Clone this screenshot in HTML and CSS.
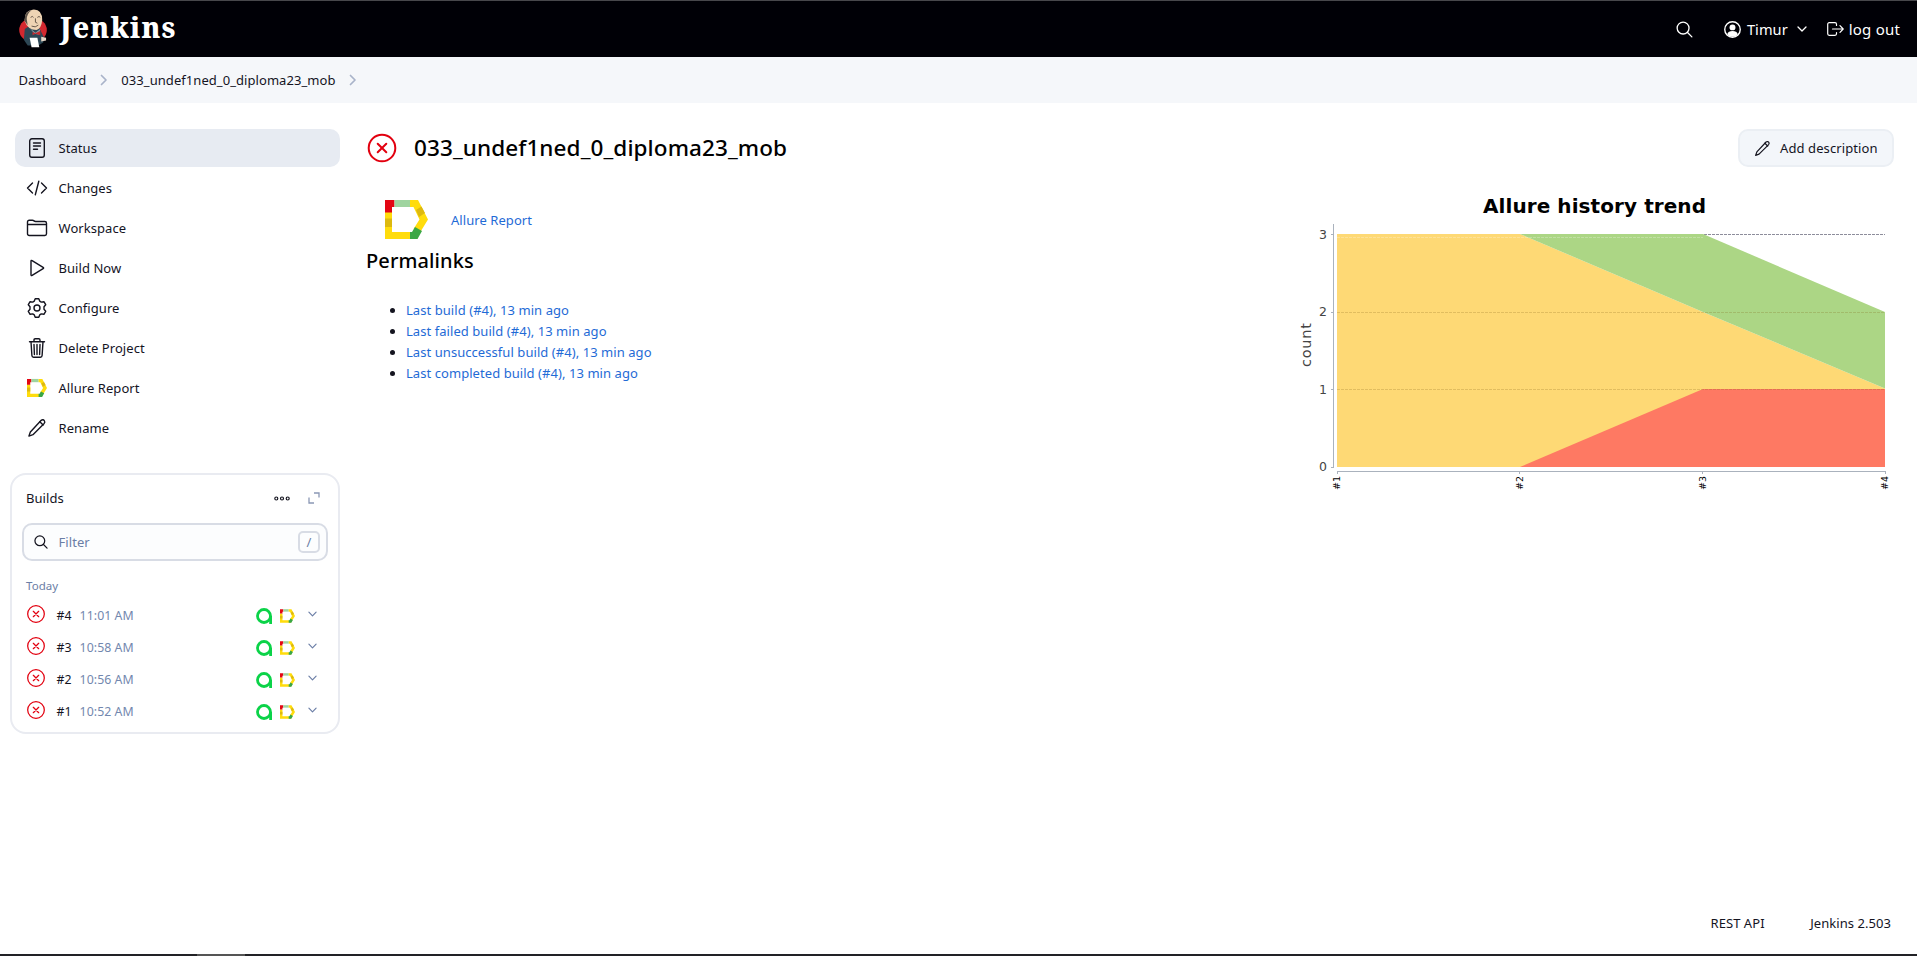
FILE: index.html
```html
<!DOCTYPE html>
<html lang="en">
<head>
<meta charset="utf-8">
<title>033_undef1ned_0_diploma23_mob [Jenkins]</title>
<link rel="stylesheet" href="styles.css">
</head>
<body>
<svg class="defs" aria-hidden="true">
  <symbol id="fail" viewBox="0 0 32 32"><g fill="none" stroke="#e2000f" stroke-width="2" stroke-linecap="round"><circle cx="16" cy="16" r="13.3"/><path d="M11.700 11.700l8.600 8.600M20.300 11.700l-8.600 8.600"/></g></symbol>
  <symbol id="allure" viewBox="0 0 43 39">
    <path fill="#ffdc0c" d="M0 12h7v20h18l8 7H0z"/><path fill="#e30613" d="M0 0h9.500v7H7v5.500H0z"/><path fill="#9fd49f" d="M9.500 0H25v7H9.500z"/><path fill="#ffdc0c" d="M25 0h8l10 19.500-8 13-6.500-3.500 6-9.500L28.500 7H25z"/><path fill="#ddb90f" d="M0 18.500h7v8.500H0zM31 10l5.500-3.500 3.500 6.500-6 4z"/><path fill="#3aa745" d="M25 32h2l3-5 7 4-4.500 8H25z"/>
  </symbol>
  <symbol id="qa" viewBox="0 0 16 16"><circle cx="8" cy="8" r="6.500" fill="none" stroke="#0bd348" stroke-width="2.800"/><path d="M13.200 8H16v8h-2.800z" fill="#0bd348"/></symbol>
  <symbol id="down" viewBox="0 0 10 6"><path d="M1 1l4 4 4-4" fill="none" stroke="currentColor" stroke-width="1.300" stroke-linecap="round" stroke-linejoin="round"/></symbol>
  <symbol id="right" viewBox="0 0 8 12"><path d="M1.500 1.500L6 6l-4.500 4.500" fill="none" stroke="#a9b3c9" stroke-width="1.700" stroke-linecap="round" stroke-linejoin="round"/></symbol>
  <symbol id="pencil" viewBox="0 0 512 512"><g fill="none" stroke="currentColor" stroke-width="36" stroke-linejoin="round" stroke-linecap="round"><path d="M364 60c28-24 62-14 78 6 16 21 20 48-2 72L152 426 48 464l38-104z"/><path d="M328 98l84 84"/></g></symbol>
  <symbol id="search" viewBox="0 0 18 18"><g fill="none" stroke="currentColor" stroke-width="1.400" stroke-linecap="round"><circle cx="7.500" cy="7.500" r="6.300"/><path d="M12.200 12.200l4.600 4.600"/></g></symbol>
</svg>

<header class="top">
  <a class="brand">
    <svg class="butler" viewBox="0 0 30 40">
      <ellipse cx="14.500" cy="21" rx="14.300" ry="12.500" fill="#d3282f"/>
      <path d="M5 31l1-11 3-2 12 1 5 10-1 5-5 3H9z" fill="#2d4756"/>
      <path d="M6 12Q5 1 14 0q10-1 10 11-1 9-6 10-9 0-12-9z" fill="#eed4b4"/>
      <path d="M6 12Q5 2 13 .500 8 4 8 10l1 6z" fill="#5b5148"/>
      <path d="M12 8q2-2 3 0M19 8q2-2 3 0M17 9v4l2 1M13 17q4 2 7-1" fill="none" stroke="#65564a" stroke-width="1"/>
      <path d="M11 19l6 5 5-4-1 6-5-1z" fill="#8b9aa3"/><path d="M14 23l3 1.500 5-2.500v4.500l-5-1.500-3 1.500z" fill="#c32a30"/>
      <path d="M11 29h8l2 10h-8z" fill="#fff"/><path d="M23 28l5 1v3l-5 1z" fill="#e5d5c5"/>
    </svg>
    <span class="wordmark">Jenkins</span>
  </a>
  <div class="tools">
    <svg class="i-search"><use href="#search"/></svg>
    <a class="user"><svg class="i-user" viewBox="0 0 16 16"><circle cx="8" cy="8" r="7.300" fill="none" stroke="#fff" stroke-width="1.300"/><circle cx="8" cy="6" r="2.800" fill="#fff"/><path d="M3 12.500q1-3 5-3t5 3q-2 2.400-5 2.400t-5-2.400z" fill="#fff"/></svg><span>Timur</span><svg class="i-down"><use href="#down"/></svg></a>
    <a class="logout"><svg class="i-out" viewBox="0 0 17 14"><path d="M9.500 3.500V2.200A1.500 1.500 0 0 0 8 .700H2.200A1.500 1.500 0 0 0 .700 2.200v9.600a1.500 1.500 0 0 0 1.500 1.500H8a1.500 1.500 0 0 0 1.500-1.500v-1.300M5.500 7h10.500M13 3.700L16.200 7 13 10.300" fill="none" stroke="#fff" stroke-width="1.200" stroke-linecap="round" stroke-linejoin="round"/></svg><span>log out</span></a>
  </div>
</header>

<nav class="crumbs"><a>Dashboard</a><svg><use href="#right"/></svg><a>033_undef1ned_0_diploma23_mob</a><svg><use href="#right"/></svg></nav>

<div class="page">
  <aside class="side">
    <nav class="tasks">
      <a class="task active"><svg viewBox="0 0 20 20"><g class="ln"><rect x="2.700" y=".800" width="14.600" height="18.400" rx="2.200"/><path d="M6.500 5h7M6.500 8h7M6.500 11.200h4"/></g></svg><span>Status</span></a>
      <a class="task"><svg viewBox="0 0 20 20"><path class="ln" d="M5.500 5L.500 10l5 5M14.500 5l5 5-5 5M11.800 3.300L8.300 16.700"/></svg><span>Changes</span></a>
      <a class="task"><svg viewBox="0 0 20 20"><path class="ln" d="M.500 15.800V4a1.700 1.700 0 0 1 1.700-1.700h3.300q.800 0 1.500.600.700.600 1.600.600h9.200a1.700 1.700 0 0 1 1.700 1.700v10.600a1.700 1.700 0 0 1-1.700 1.700H2.200a1.700 1.700 0 0 1-1.700-1.700zM.500 6.500h19"/></svg><span>Workspace</span></a>
      <a class="task"><svg viewBox="0 0 20 20"><path class="ln" d="M4 3.200v13.600q0 1.200 1.100.600l11-6.700q1-.700 0-1.400l-11-6.700Q4 2 4 3.200z"/></svg><span>Build Now</span></a>
      <a class="task"><svg viewBox="0 0 20 20"><g class="ln"><circle cx="10" cy="10" r="3"/><path d="M8.200.700h3.600l.9 2.400 1.600 1 2.600-.4 1.800 3-1.700 2v2.600l1.700 2-1.800 3-2.600-.4-1.600 1-.9 2.400H8.200l-.9-2.400-1.600-1-2.600.4-1.800-3 1.700-2V8.700l-1.700-2 1.800-3 2.600.4 1.600-1z"/></g></svg><span>Configure</span></a>
      <a class="task"><svg viewBox="0 0 20 20"><path class="ln" d="M2.500 3.700h15M4 3.700l.9 13.800q.1 1.700 1.700 1.700h6.800q1.600 0 1.700-1.700L16 3.700M7 3.700V2q0-1.200 1.200-1.200h3.600Q13 .800 13 2v1.700M10 6.500v10M7 6.500l.4 10M13 6.500l-.4 10"/></svg><span>Delete Project</span></a>
      <a class="task"><svg><use href="#allure"/></svg><span>Allure Report</span></a>
      <a class="task"><svg><use href="#pencil"/></svg><span>Rename</span></a>
    </nav>
    <section class="builds">
      <div class="bhead"><span>Builds</span><svg class="dots" viewBox="0 0 16 5"><g fill="none" stroke="#14141f" stroke-width="1.200"><circle cx="2.300" cy="2.500" r="1.500"/><circle cx="8" cy="2.500" r="1.500"/><circle cx="13.700" cy="2.500" r="1.500"/></g></svg><svg class="expand" viewBox="0 0 12 12"><path d="M6 1h5v4.500M1 5.500V11h5" fill="none" stroke="#8b98b5" stroke-width="1.300"/></svg></div>
      <div class="filter"><svg viewBox="0 0 18 18"><g fill="none" stroke="currentColor" stroke-width="1.600" stroke-linecap="round"><circle cx="7.500" cy="7.500" r="6.300"/><path d="M12.200 12.200l4.600 4.600"/></g></svg><span>Filter</span><kbd>/</kbd></div>
      <div class="day">Today</div>
      <div class="build"><svg class="st"><use href="#fail"/></svg><b>#4</b><time>11:01 AM</time><svg class="qa"><use href="#qa"/></svg><svg class="al"><use href="#allure"/></svg><svg class="dn"><use href="#down"/></svg></div>
      <div class="build"><svg class="st"><use href="#fail"/></svg><b>#3</b><time>10:58 AM</time><svg class="qa"><use href="#qa"/></svg><svg class="al"><use href="#allure"/></svg><svg class="dn"><use href="#down"/></svg></div>
      <div class="build"><svg class="st"><use href="#fail"/></svg><b>#2</b><time>10:56 AM</time><svg class="qa"><use href="#qa"/></svg><svg class="al"><use href="#allure"/></svg><svg class="dn"><use href="#down"/></svg></div>
      <div class="build"><svg class="st"><use href="#fail"/></svg><b>#1</b><time>10:52 AM</time><svg class="qa"><use href="#qa"/></svg><svg class="al"><use href="#allure"/></svg><svg class="dn"><use href="#down"/></svg></div>
    </section>
  </aside>

  <main class="main">
    <div class="mhead"><svg class="big"><use href="#fail"/></svg><h1>033_undef1ned_0_diploma23_mob</h1><button><svg><use href="#pencil"/></svg><span>Add description</span></button></div>
    <div class="cols">
      <div class="info">
        <a class="report"><svg><use href="#allure"/></svg><span>Allure Report</span></a>
        <h2>Permalinks</h2>
        <ul><li><a>Last build (#4), 13 min ago</a></li><li><a>Last failed build (#4), 13 min ago</a></li><li><a>Last unsuccessful build (#4), 13 min ago</a></li><li><a>Last completed build (#4), 13 min ago</a></li></ul>
      </div>
      <svg class="chart" viewBox="1290 187 610 310">
        <text class="ct" x="1594.500" y="213" text-anchor="middle" textLength="223">Allure history trend</text>
        <path class="grid3" d="M1704 234.500h181"/>
        <path fill="#fed975" d="M1337 234h183l183 78 182 76.500V467H1337z"/>
        <path fill="#acd685" d="M1520 234h183l182 78v76.500L1703 312z"/>
        <path fill="#fe7963" d="M1520 467l183-78h182v78z"/>
        <path class="grid" d="M1337 312.500h548M1337 389.500h548"/><path class="grid l" d="M1337 237.500h366"/>
        <path class="axis" d="M1333.500 224v244M1331 234.500h2M1331 312.500h2M1331 389.500h2M1331 467.500h2M1337 471.500h549M1337.500 471v3M1519.500 471v3M1702.500 471v3M1885.500 471v3"/>
        <g class="yl"><text x="1327" y="239">3</text><text x="1327" y="316">2</text><text x="1327" y="394">1</text><text x="1327" y="471">0</text></g>
        <g class="xl"><text transform="translate(1340 490) rotate(-90)">#1</text><text transform="translate(1523 490) rotate(-90)">#2</text><text transform="translate(1706 490) rotate(-90)">#3</text><text transform="translate(1888 490) rotate(-90)">#4</text></g>
        <text class="cnt" transform="translate(1311 367) rotate(-90)" textLength="44">count</text>
      </svg>
    </div>
  </main>
</div>
<footer><a>REST API</a><a>Jenkins 2.503</a></footer>
<div class="strip"><i></i></div>
</body>
</html>
```
FILE: styles.css
```css
* { box-sizing: border-box; }
body { margin: 0; height: 956px; display: flex; flex-direction: column; background: #fff; color: #14141f; font: 13px/20px "Noto Sans", "Open Sans", sans-serif; letter-spacing: .06px; overflow: hidden; }
svg { display: block; flex: none; }
.defs { position: absolute; width: 0; height: 0; }
.top { height: 57px; flex: none; background: #000006; border-top: 1px solid #47474b; display: flex; align-items: center; justify-content: space-between; padding: 0 17px 0 19px; color: #fff; }
.brand { display: flex; align-items: center; gap: 12px; }
.butler { width: 29px; height: 40px; }
.wordmark { font: 800 28px/36px "Noto Serif", "DejaVu Serif", "Liberation Serif", serif; letter-spacing: 1.2px; padding-bottom: 4px; }
.tools { display: flex; align-items: center; font-size: 15px; }
.i-search { width: 17px; height: 17px; margin-right: 31px; }
.user, .logout { display: flex; align-items: center; }
.user { font-size: 14.6px; }
.i-user { width: 17px; height: 17px; margin-right: 6px; }
.i-down { width: 10px; height: 6px; margin: 0 20px 0 9px; }
.i-out { width: 17px; height: 14px; margin-right: 5px; }
.logout span { letter-spacing: .2px; }
.crumbs { height: 46px; flex: none; background: #f5f7fa; display: flex; align-items: center; padding-left: 18.5px; }
.crumbs svg { width: 8px; height: 12px; margin: 0 13.5px; }
.page { flex: 1; display: flex; padding-top: 26px; }
.side { width: 340px; flex: none; }
.tasks { display: grid; gap: 2px; padding-left: 15px; }
.task { height: 38px; border-radius: 10px; display: flex; align-items: center; gap: 11.5px; padding-left: 12px; }
.task svg { width: 20px; height: 20px; overflow: visible; }
.active { background: #e7ebf2; }
.ln { fill: none; stroke: #14141f; stroke-width: 1.4; stroke-linecap: round; stroke-linejoin: round; }
.builds { margin: 26px 0 0 10px; height: 261px; border: 2px solid #e9ebf1; border-radius: 16px; padding: 0 10px; }
.bhead { display: flex; align-items: center; height: 48px; padding: 0 8px 2px 4px; }
.bhead span { flex: 1; }
.dots { width: 16px; height: 5px; margin-right: 18px; }
.expand { width: 12px; height: 12px; }
.filter { height: 38px; border: 2px solid #d8dce5; border-radius: 10px; background: #fcfdfe; display: flex; align-items: center; padding: 0 6px 0 10px; color: #6b7ea6; }
.filter svg { width: 14px; height: 14px; color: #14141f; margin-right: 10.5px; }
.filter span { flex: 1; }
kbd { width: 22px; height: 22px; border: 2px solid #d8dce5; border-radius: 5px; font: inherit; line-height: 18px; text-align: center; }
.day { color: #6b7ea6; font-size: 11.5px; margin: 15px 0 2px 4px; line-height: 20px; }
.build { height: 32px; display: flex; align-items: center; padding-left: 4px; font-size: 12.3px; }
.build b { font-weight: 400; margin: 3px 8px 0 10.5px; }
.build time { color: #7287ae; flex: 1; margin-top: 3px; }
.st { width: 20px; height: 20px; }
.qa { width: 16px; height: 16px; margin: 3px 8px 0 0; }
.al { width: 15px; height: 14px; margin: 3px 13px 0 0; }
.dn { width: 9px; height: 6px; color: #6b7ea6; margin-right: 11px; }
.main { flex: 1; padding: 0 23px 0 26px; }
.mhead { display: flex; align-items: center; height: 38px; }
.big { width: 32px; height: 32px; }
h1 { margin: 0; padding-left: 16px; font-size: 22.5px; font-weight: 500; line-height: 32px; letter-spacing: .1px; color: #000; flex: 1; }
button { height: 38px; width: 156px; border: 2px solid #ebeff4; background: #f3f6fa; border-radius: 10px; font: inherit; letter-spacing: .1px; color: inherit; display: flex; align-items: center; gap: 9px; padding: 0 0 0 14px; }
button svg { width: 17px; height: 17px; }
.cols { display: flex; justify-content: space-between; }
.report { display: flex; align-items: center; gap: 23px; margin: 33px 0 0 19px; color: #1f6bd6; }
.report svg { width: 43px; height: 39px; }
h2 { margin: 8px 0 0; font-size: 20px; font-weight: 500; line-height: 28px; letter-spacing: .1px; color: #000; }
ul { margin: 25px 0 0; padding-left: 40px; line-height: 21px; }
li a { color: #1f6bd6; }
.chart { width: 610px; height: 310px; margin: 20px -6px 0 0; font-family: "DejaVu Sans", sans-serif; letter-spacing: 0; }
.ct { font-size: 20px; font-weight: 700; fill: #000; }
.axis { stroke: #aab2bd; fill: none; }
.grid3 { stroke: #8d8d9b; stroke-dasharray: 3 1; }
.grid { stroke: #7a5a10; stroke-opacity: .22; stroke-dasharray: 3 1; }
.l { stroke: #fff; stroke-opacity: .25; }
.yl { font-size: 12.5px; fill: #444; text-anchor: end; }
.xl { font-size: 9.5px; fill: #000; }
.cnt { font-size: 14.5px; fill: #444; }
footer { display: flex; justify-content: flex-end; gap: 45.5px; padding: 0 26px 21px 0; }
.strip { height: 2px; flex: none; background: #222226; padding-left: 197px; }
.strip i { display: block; width: 48px; height: 2px; background: #555; }
```
